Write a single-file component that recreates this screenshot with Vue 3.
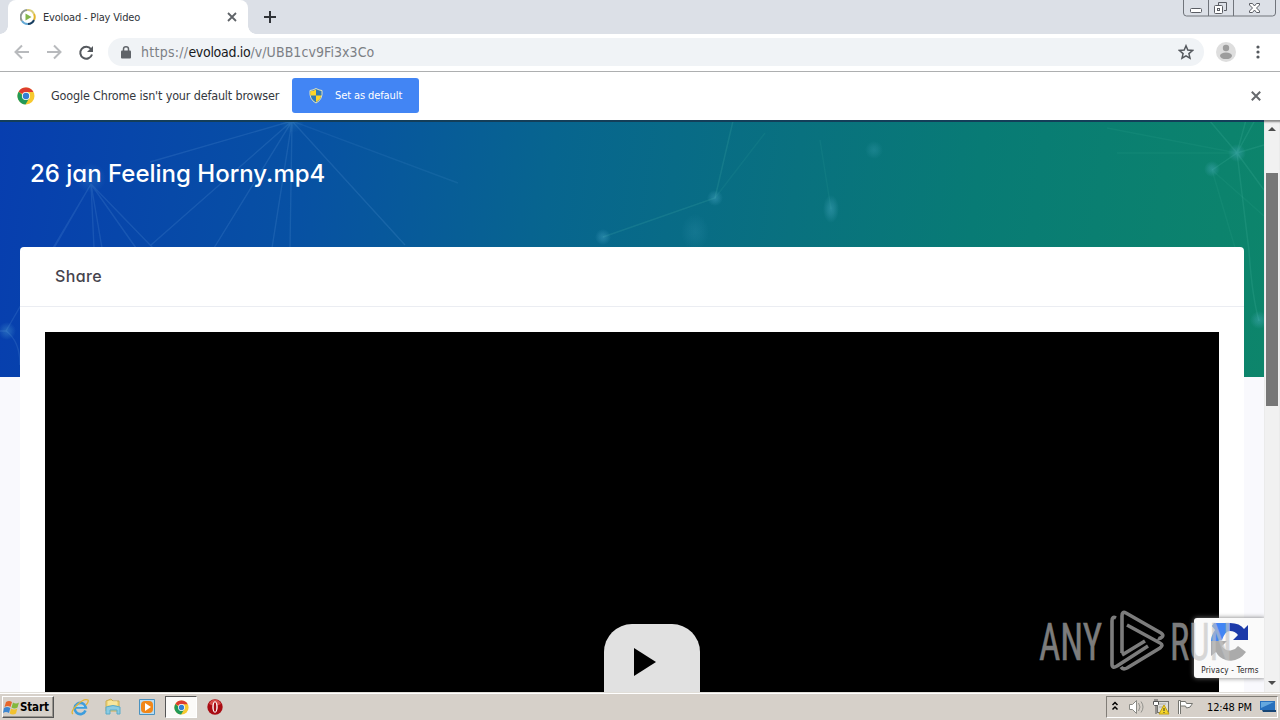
<script setup>
const tabTitle = 'Evoload - Play Video'
const videoTitle = '26 jan Feeling Horny.mp4'
</script>

<template>
  <div class="screen">
    <header class="tabs">
      <div class="tab">
        <svg class="favicon" width="16" height="16" viewBox="0 0 16 16" fill="none">
          <path d="M7 1A7 7 0 0 0 2 12" stroke="#8e9793" stroke-width="2" />
          <path d="M7 1A7 7 0 0 1 14 5" stroke="#d9cf7c" stroke-width="2" />
          <path d="M14 5A7 7 0 0 1 14 11" stroke="#e3b428" stroke-width="2" />
          <path d="M14 11A7 7 0 0 1 8 15" stroke="#173e60" stroke-width="2" />
          <path d="M8 15A7 7 0 0 1 2 12" stroke="#63a9d6" stroke-width="2" />
          <path d="M5.500 4.500v7l6-3.500z" fill="#83b64b" />
        </svg>
        <span class="tab-title">{{ tabTitle }}</span>
        <svg class="tab-close" width="10" height="10" viewBox="0 0 10 10"><path d="M1 1l8 8M9 1L1 9" stroke="#5f6368" stroke-width="1.800" /></svg>
      </div>
      <svg class="plus" width="14" height="14" viewBox="0 0 14 14"><path d="M7 1v12M1 7h12" stroke="#303338" stroke-width="2" /></svg>
      <svg class="window-buttons" width="94" height="18" viewBox="0 0 94 18" fill="none">
        <path d="M.5 0v13q0 3 3 3h86q3 0 3-3V0M25.500 0v16M50.500 0v16" stroke="#70747b" />
        <rect x="7.500" y="8.500" width="11" height="4" rx="1" fill="#fff" stroke="#5a5d64" />
        <path d="M35.500 5V2.500h8v8H41" stroke="#5a5d64" />
        <rect x="31.500" y="5.500" width="8" height="8" rx="1" fill="#fff" stroke="#5a5d64" />
        <rect x="34.500" y="8.500" width="2" height="2" stroke="#5a5d64" />
        <path d="M66.500 3.500h3l2 2.500 2-2.500h3v1.500l-3 3 3 3v1.500h-3l-2-2.500-2 2.500h-3V11l3-3-3-3z" fill="#fff" stroke="#5a5d64" />
      </svg>
    </header>

    <nav class="toolbar">
      <svg class="nav-icons" width="64" height="16" viewBox="0 0 64 16" fill="none" stroke-width="2">
        <path d="M15 8H2M8 1.500L1.500 8L8 14.500" stroke="#b8babd" />
        <path d="M33 8h13M40 1.500L46.500 8L40 14.500" stroke="#b8babd" />
      </svg>
      <svg class="reload" width="16" height="16" viewBox="0 0 16 16"><path d="M13 4A6 6 0 1 0 14 9.500" fill="none" stroke="#55595e" stroke-width="2" /><path d="M15 1v6H9z" fill="#55595e" /></svg>
      <div class="omnibox">
        <svg class="lock" width="10" height="13" viewBox="0 0 10 13"><rect x="0" y="4.500" width="10" height="8" rx="1" fill="#5f6368" /><path d="M2.500 5V3a2.500 2.200 0 0 1 5 0v2" fill="none" stroke="#5f6368" stroke-width="1.500" /></svg>
        <span class="url">https://<b>evoload.io</b><i>/v/UBB1cv9Fi3x3Co</i></span>
        <svg class="star" width="16" height="16" viewBox="0 0 16 16"><path d="M8 1.800l1.800 4.300 4.700.4-3.600 3.100 1.100 4.600L8 11.800l-4 2.400 1.100-4.600-3.600-3.100 4.700-.4z" fill="none" stroke="#55595e" stroke-width="1.500" /></svg>
      </div>
      <svg class="avatar" width="20" height="20" viewBox="0 0 20 20"><circle cx="10" cy="10" r="10" fill="#dedede" /><circle cx="10" cy="6" r="3.200" fill="#9d9d9d" /><ellipse cx="10" cy="13.800" rx="6" ry="3.300" fill="#9d9d9d" /></svg>
      <svg class="menu" width="4" height="14" viewBox="0 0 4 14" fill="#55595e"><circle cx="2" cy="2" r="1.600" /><circle cx="2" cy="7" r="1.600" /><circle cx="2" cy="12" r="1.600" /></svg>
    </nav>

    <section class="infobar">
      <svg class="chrome" width="18" height="18" viewBox="0 0 18 18">
        <circle cx="9" cy="9" r="8.500" fill="#f7c92f" />
        <path d="M9 9L1.600 4.700A8.500 8.500 0 0 1 16.400 5H9z" fill="#dd3c30" />
        <path d="M1.600 4.700A8.500 8.500 0 0 0 8.500 17.500L12.300 11H9z" fill="#229957" />
        <circle cx="9" cy="9" r="4.100" fill="#fff" /><circle cx="9" cy="9" r="3.200" fill="#347fd4" />
      </svg>
      <span class="notice">Google Chrome isn't your default browser</span>
      <button class="default-button">
        <svg width="14" height="16" viewBox="0 0 14 16"><path d="M7 .5Q10 2.300 13 2.500q1 9-6 12.500Q0 11.500 1 2.500 4 2.300 7 .5z" fill="#317bb5" stroke="#e4e4bd" /><path d="M7 1.500v6H1.500Q1 4.500 1.500 3.300 4.500 3 7 1.500zM7 7.500h5.300q-1 4.500-5.300 6.500z" fill="#ffd527" /></svg>
        <span>Set as default</span>
      </button>
      <svg class="info-close" width="10" height="10" viewBox="0 0 10 10"><path d="M.8.8l8.400 8.400M9.200.8L.8 9.200" stroke="#66696d" stroke-width="2" /></svg>
    </section>

    <main class="viewport">
      <div class="page">
        <div class="hero">
          <svg class="network" width="1264" height="257" viewBox="0 0 1264 257" fill="none">
            <defs>
              <radialGradient id="node"><stop offset="0" stop-color="#65bfe0" stop-opacity=".3" /><stop offset=".4" stop-color="#65bfe0" stop-opacity=".2" /><stop offset="1" stop-color="#65bfe0" stop-opacity="0" /></radialGradient>
            </defs>
            <g stroke="#78aee9" stroke-opacity=".16" stroke-width="1.400">
              <path d="M91 64L53 128M91 64l3 64M91 64l11 64M91 64l45 64M91 64l62 64M6 211L91 64M6 211H-5M6 211q14 10 14 34M150 42L292 1M292 1L151 125M292 1l-78 127M292 1l-20 127M292 1l-2 127M292 1l113 124" />
              <path d="M292 1l166 62" stroke-opacity=".1" />
            </g>
            <g stroke="#5bc9b6" stroke-opacity=".15" stroke-width="1.500">
              <path d="M603 117l112-39L733 1M1237 33l-28-33M1237 33l9-33M1237 33l18-33M1237 33l27-8M1237 33l27 37M1237 33l12 98q3 45 10 70M1237 33l-25 17" />
              <path d="M715 78l50-65M831 89L820 20M1237 33l-130-25M1237 33h-120M1212 50l24 81M1212 50l52 46" stroke-opacity=".08" />
            </g>
            <g fill="url(#node)"><circle cx="91" cy="58" r="15" opacity=".6" /><circle cx="7" cy="211" r="9" /><circle cx="292" cy="1" r="12" opacity=".5" /><circle cx="603" cy="117" r="8" /><circle cx="715" cy="78" r="8" /><ellipse cx="831" cy="89" rx="8" ry="14" /><circle cx="874" cy="30" r="9" opacity=".6" /><ellipse cx="695" cy="112" rx="14" ry="18" opacity=".4" /><circle cx="1237" cy="33" r="9" /><circle cx="1212" cy="49" r="8" /><circle cx="1259" cy="200" r="9" /></g>
          </svg>
          <h1>{{ videoTitle }}</h1>
        </div>
        <article class="card">
          <div class="card-head">Share</div>
          <div class="card-body">
            <div class="player">
              <button class="play"><svg width="22" height="28" viewBox="0 0 22 28"><path d="M0 0v28l22-14z" /></svg></button>
            </div>
          </div>
        </article>
        <aside class="captcha">
          <svg width="40" height="40" viewBox="0 0 40 40">
            <path d="M20 2q10 0 14 6l4-4v15H23l5-5q-3-4-8-4z" fill="#1c3aa9" />
            <path d="M20 2v8q-5 0-8 9l-4 1H1q0-5 4-11L2 5l2-3z" fill="#4285f4" />
            <path d="M1 20h16l-5 5q4 6 10 4 4-1 6-4l8 6q-8 11-20 8-7-2-10-8l-5 4z" fill="#ababab" />
          </svg>
          <span>Privacy - Terms</span>
        </aside>
      </div>
      <div class="scrollbar">
        <svg width="8" height="4" viewBox="0 0 8 4"><path d="M0 4h8L4 0z" fill="#4c4c4c" /></svg>
        <div class="thumb"></div>
        <svg class="down" width="8" height="4" viewBox="0 0 8 4"><path d="M0 0h8L4 4z" fill="#4c4c4c" /></svg>
      </div>
    </main>

    <footer class="taskbar">
      <button class="start">
        <svg width="17" height="17" viewBox="0 0 17 17"><path d="M3 3q3-2 6 0L7.500 8Q5 6 1.500 8z" fill="#e6672c" /><path d="M10 3.500q3 2 6 0L14.500 8.500q-3 2-6 0z" fill="#83b83d" /><path d="M1 9q3-2 6.300 0L6 14q-3-2-6 0z" fill="#3d86d0" /><path d="M8 9.500q3 2 6.300 0L13 14.500q-3 2-6.300 0z" fill="#f2c12e" /></svg>
        <span>Start</span>
      </button>
      <svg class="task-icon ie" width="18" height="18" viewBox="0 0 18 18" fill="none"><path d="M14.500 12.500A5.600 5.600 0 1 1 14.800 9.500H4" stroke="#3d9ddd" stroke-width="2.600" /><path d="M5 8.500h8" stroke="#a5e2fa" /><path d="M2 16Q-1 14 6 7T17 2q1 2-2 5" stroke="#e3b535" stroke-width="1.300" /></svg>
      <svg class="task-icon folder" width="18" height="18" viewBox="0 0 18 18"><path d="M2 3l5-2 2 2h6v10H2z" fill="#f1d77b" stroke="#c9ad55" /><path d="M4 4h9M4 6h9" stroke="#fff4bd" /><path d="M2 16V9q7-3 14 0v7h-3v-4H6v4z" fill="#8bcbe2" stroke="#5aabc9" /></svg>
      <svg class="task-icon media" width="18" height="18" viewBox="0 0 18 18"><path d="M1.500 1.500h15v15h-15z" fill="#b9dcf2" stroke="#4b92bf" /><rect x="3" y="3" width="12" height="12" rx="4" fill="#f18719" /><path d="M7 5v8l6-4z" fill="#fff" /></svg>
      <div class="active-task">
        <svg width="15" height="15" viewBox="0 0 18 18"><circle cx="9" cy="9" r="8.500" fill="#f7c92f" /><path d="M9 9L1.600 4.700A8.500 8.500 0 0 1 16.400 5H9z" fill="#dd3c30" /><path d="M1.600 4.700A8.500 8.500 0 0 0 8.500 17.500L12.300 11H9z" fill="#229957" /><circle cx="9" cy="9" r="4.100" fill="#fff" /><circle cx="9" cy="9" r="3.200" fill="#347fd4" /></svg>
      </div>
      <svg class="opera" width="16" height="16" viewBox="0 0 16 16"><circle cx="8" cy="8" r="7.700" fill="#a90c13" /><path d="M2 5Q4 .8 8 .8T14 5Q8 8 2 5" fill="#d64c49" /><ellipse cx="8" cy="8" rx="2.700" ry="5.800" fill="#fff" /><ellipse cx="8" cy="8" rx="1.300" ry="4.700" fill="#a90c13" /></svg>
      <div class="tray">
        <svg width="90" height="18" viewBox="0 0 90 18" fill="none">
          <path d="M5.500 7L8 4.500 10.500 7M5.500 11.500L8 9l2.500 2.500" stroke="#000" stroke-width="1.500" />
          <path d="M22.500 6.500h3l4-4v13l-4-4h-3z" fill="#fff" stroke="#8a8a85" /><path d="M31.500 5q3 4 0 8M34 3.500q4 5.500 0 11" stroke="#92928d" />
          <rect x="50.500" y="3.500" width="11" height="11" fill="#dededa" stroke="#74746f" /><path d="M52 6h7M52 9h5" stroke="#aaa" /><path d="M46.500 3.500h5v3l-1 1h-3l-1-1zM48 1v2M50 1v2M49 8v8" fill="#fff" stroke="#555" /><path d="M57 7l5 9H52z" fill="#f5d629" stroke="#c4a111" /><path d="M57 10v3M57 14v1" stroke="#333" />
          <path d="M71.500 16V2.500h2V16M73.500 3.500h5l1 2h6q-2 5-6 4.500l-1-2h-5" fill="#fff" stroke="#74746f" />
        </svg>
        <time>12:48 PM</time>
        <svg class="desktop" width="16" height="14" viewBox="0 0 16 14"><path d="M0 1h15v9H0z" fill="#2870bd" /><path d="M1 2h13L1 8z" fill="#65a8df" /><path d="M2 10h14v2H3z" fill="#174575" /></svg>
      </div>
    </footer>

    <svg class="watermark" width="210" height="72" viewBox="0 0 210 72">
      <g fill="#c3c3c3" stroke="#c3c3c3" stroke-width=".5" font-size="52" font-weight="400">
        <text x="3" y="55" textLength="63" lengthAdjust="spacingAndGlyphs">ANY</text>
        <text x="134" y="55" textLength="62" lengthAdjust="spacingAndGlyphs">RUN</text>
      </g>
      <path d="M80 13q-4-2-4 3v43q0 5 5 2l31-20M86 48V11q0-5 4-3l35 20q3 2 1 4t-4 1M91 20l33 18q4 2 0 5L91 63q-4 2-6-1M86 50l23-14" fill="none" stroke="#c3c3c3" stroke-width="3.600" stroke-linejoin="round" />
    </svg>
  </div>
</template>

<style>
html, body { margin: 0; overflow: hidden; }
</style>

<style scoped>
.screen { position: relative; width: 1280px; height: 720px; overflow: hidden; display: flex; flex-direction: column; background: #fff; font-family: "DejaVu Sans Condensed", "DejaVu Sans", sans-serif; font-stretch: condensed; }
* { box-sizing: border-box; }
svg { display: block; flex: none; }
button { border: 0; padding: 0; font: inherit; }
span, time, h1 { white-space: nowrap; }
.tabs { height: 34px; flex: none; display: flex; background: #dce0e7; }
.tab { position: relative; width: 240px; margin-left: 8px; height: 34px; border-radius: 8px 8px 0 0; background: #fff; display: flex; align-items: center; padding-left: 12px; }
.tab::before, .tab::after { content: ""; position: absolute; bottom: 0; width: 8px; height: 8px; }
.tab::before { left: -8px; background: radial-gradient(circle at 0 0, transparent 7.500px, #fff 8px); }
.tab::after { right: -8px; background: radial-gradient(circle at 100% 0, transparent 7.500px, #fff 8px); }
.tab-title { margin-left: 7px; width: 184px; font-size: 11px; letter-spacing: -.18px; color: #303338; }
.plus { margin: 10px 0 0 15px; }
.window-buttons { margin-left: auto; margin-right: 3px; }
.toolbar { height: 38px; flex: none; display: flex; align-items: center; border-bottom: 1px solid #adafb0; padding: 0 20px 1px 14px; }
.reload { margin-bottom: -1px; }
.omnibox { height: 28px; width: 1096px; margin-left: 14px; border-radius: 14px; background: #f0f3f6; display: flex; align-items: center; padding: 0 10px 0 13px; }
.url { margin-left: 10px; font-size: 14px; font-weight: 200; color: #7c8085; letter-spacing: .28px; }
.url b { font-weight: 400; color: #17191c; letter-spacing: -.3px; }
.url i { font-style: normal; letter-spacing: .08px; }
.star { margin-left: auto; }
.avatar { margin-left: 12px; }
.menu { margin-left: auto; }
.infobar { height: 48px; flex: none; display: flex; align-items: center; padding: 0 19px 0 17px; background: #fff; }
.notice { margin: -2px 0 0 16px; width: 241px; font-size: 12.500px; letter-spacing: -.17px; color: #35383d; }
.default-button { width: 127px; height: 35px; margin-top: -1px; border-radius: 3px; background: #4285f4; color: #fff; display: flex; align-items: center; padding-left: 17px; }
.default-button span { margin-left: 12px; font-size: 11px; letter-spacing: -.1px; }
.info-close { margin-left: auto; }
.viewport { height: 572px; flex: none; display: flex; }
.page { position: relative; width: 1264px; height: 572px; background: #f9f9fd; overflow: hidden; }
.hero { position: relative; height: 257px; background: linear-gradient(97deg, #073eaf 0%, #0751a3 24%, #07658f 43%, #09717f 62%, #087b75 76%, #0d856b 100%); overflow: hidden; border-top: 2px solid #143e59; }
.network { position: absolute; left: 0; top: -2px; }
h1 { position: relative; margin: 36px 0 0 30px; font: 500 24px/32px Inter, sans-serif; font-feature-settings: "cv11"; color: #fff; letter-spacing: 0; }
.card { position: relative; width: 1224px; height: 460px; margin: -130px 20px 0; background: #fff; border-radius: 4px 4px 0 0; }
.card-head { height: 60px; border-bottom: 1px solid #ebedf2; padding-left: 35px; font: 500 16px/59px Inter, sans-serif; font-feature-settings: "cv11"; letter-spacing: .4px; color: #45434d; }
.card-body { padding: 25px; }
.player { height: 400px; background: #000; display: flex; justify-content: center; align-items: flex-start; }
.play { width: 96px; height: 96px; margin: 292px 0 0 40px; border-radius: 28px; background: #e1e1e1; display: flex; align-items: flex-start; padding: 24px 0 0 30px; }
.captcha { position: absolute; left: 1194px; top: 498px; width: 72px; height: 60px; border-radius: 3px; background: #fafafa; box-shadow: 0 0 5px #777; display: flex; flex-direction: column; align-items: center; padding: 3px 0 0; }
.captcha span { font: 8px/12px "DejaVu Sans", sans-serif; font-stretch: condensed; color: #222; margin-top: 4px; letter-spacing: .22px; }
.scrollbar { width: 16px; background: #f1f1f1; display: flex; flex-direction: column; align-items: center; padding: 7px 0; box-shadow: inset 0 3px 2px -1px #888; }
.thumb { margin-top: 42px; width: 12px; height: 233px; background: #777; }
.down { margin-top: auto; }
.taskbar { height: 28px; flex: none; background: #d6d0c9; border-top: 1px solid #e1ded8; box-shadow: inset 0 1px #fff; display: flex; align-items: center; padding: 1px 2px 0; }
.start { width: 52px; height: 22px; border: 1px solid #555; border-left-color: #fff; border-top-color: #fff; box-shadow: inset -1px -1px #99958e; background: #d6d0c9; display: flex; align-items: center; }
.start span { font-size: 11.500px; font-weight: 700; color: #000; letter-spacing: -.15px; }
.ie { margin-left: 17px; }
.folder { margin-left: 15px; }
.media { margin-left: 16px; }
.active-task { width: 32px; height: 22px; margin-left: 9px; border: 1px solid #fff; border-left-color: #555; border-top-color: #555; background: #fbfaf8; display: grid; place-items: center; }
.opera { margin-left: 10px; }
.tray { width: 172px; height: 22px; margin-left: auto; border: 1px solid #fff; border-left-color: #817d77; border-top-color: #817d77; display: flex; align-items: center; }
time { width: 52px; margin-left: 10px; font-size: 11px; color: #000; letter-spacing: -.15px; }
.desktop { margin-left: 1px; }
.watermark { position: absolute; left: 1036px; top: 605px; opacity: .64; font-family: Roboto, sans-serif; }
</style>
